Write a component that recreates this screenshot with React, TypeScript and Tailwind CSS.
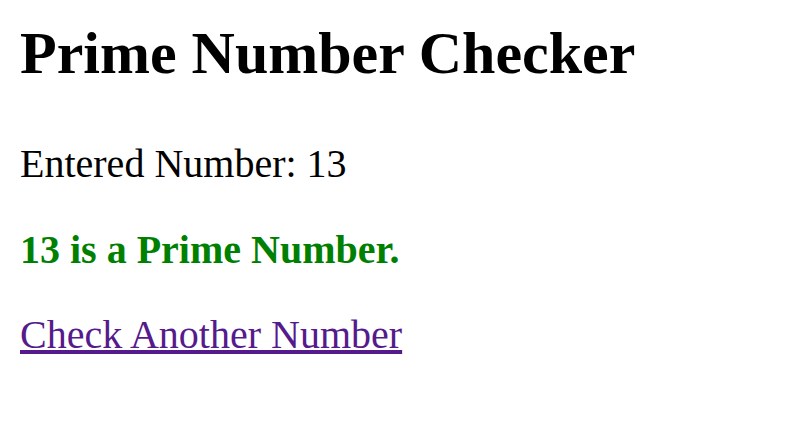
export default function App() {
  return (
    <div className="min-h-[444px] bg-white px-[20px] pt-[23px] text-black" style={{ fontFamily: '"Liberation Serif", "Times New Roman", serif' }}>
      <h1 className="text-[60px] font-bold leading-[60px]">Prime Number Checker</h1>
      <p className="mt-[61px] text-[40px] leading-[40px]">Entered Number: 13</p>
      <p className="mt-[46px] text-[40px] font-bold leading-[40px] text-[#008000]">13 is a Prime Number.</p>
      <p className="mt-[45px] text-[40px] leading-[40px]">
        <a href="#" className="text-[#551a8b] underline">Check Another Number</a>
      </p>
    </div>
  );
}
